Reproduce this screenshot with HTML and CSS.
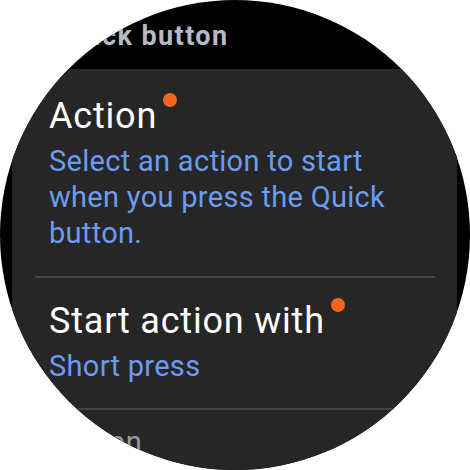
FILE: index.html
```html
<!DOCTYPE html>
<html>
<head>
<meta charset="utf-8">
<link rel="stylesheet" href="styles.css">
</head>
<body>
<div class="watch">
  <div class="header">Quick button</div>
  <div class="card">
    <div class="item first">
      <div class="title">Action<span class="dot"></span></div>
      <div class="sub">Select an action to start when you press the Quick button.</div>
    </div>
    <div class="divider"></div>
    <div class="item second">
      <div class="title">Start action with<span class="dot"></span></div>
      <div class="sub">Short press</div>
    </div>
    <div class="divider"></div>
    <div class="item third">
      <div class="title small">Screen</div>
    </div>
  </div>
</div>
</body>
</html>
```

FILE: styles.css
```css
html, body {
  margin: 0;
  padding: 0;
  background: #ffffff;
}
.watch {
  width: 470px;
  height: 470px;
  border-radius: 50%;
  overflow: hidden;
  background: #000000;
  font-family: Roboto, "Noto Sans", sans-serif;
  display: flex;
  flex-direction: column;
}
.header {
  height: 69px;
  box-sizing: border-box;
  padding: 21px 0 0 57px;
  font-size: 27px;
  line-height: 30px;
  font-weight: 700;
  letter-spacing: 1.4px;
  color: #b5bbc4;
  flex: none;
}
.card {
  flex: 1;
  margin: 0 13px 0 12px;
  background: #262626;
  padding-top: 4px;
}
.item {
  padding: 21px 20px 25px 37px;
}
.second {
  padding-top: 21px;
  padding-bottom: 24px;
}
.third {
  padding-top: 14px;
}
.title {
  font-size: 36px;
  line-height: 44px;
  color: #ffffff;
  letter-spacing: 0.8px;
}
.title.small {
  font-size: 29px;
  line-height: 36px;
  color: #9a9a9a;
}
.dot {
  display: inline-block;
  width: 14px;
  height: 14px;
  border-radius: 50%;
  background: #f4661f;
  vertical-align: top;
  margin-left: 6px;
  margin-top: -1px;
}
.sub {
  margin-top: 5px;
  font-size: 29px;
  line-height: 36px;
  letter-spacing: 0.3px;
  color: #6b9cf0;
}
.divider {
  height: 2px;
  margin: 0 22px 0 23px;
  background: #434343;
}
```
